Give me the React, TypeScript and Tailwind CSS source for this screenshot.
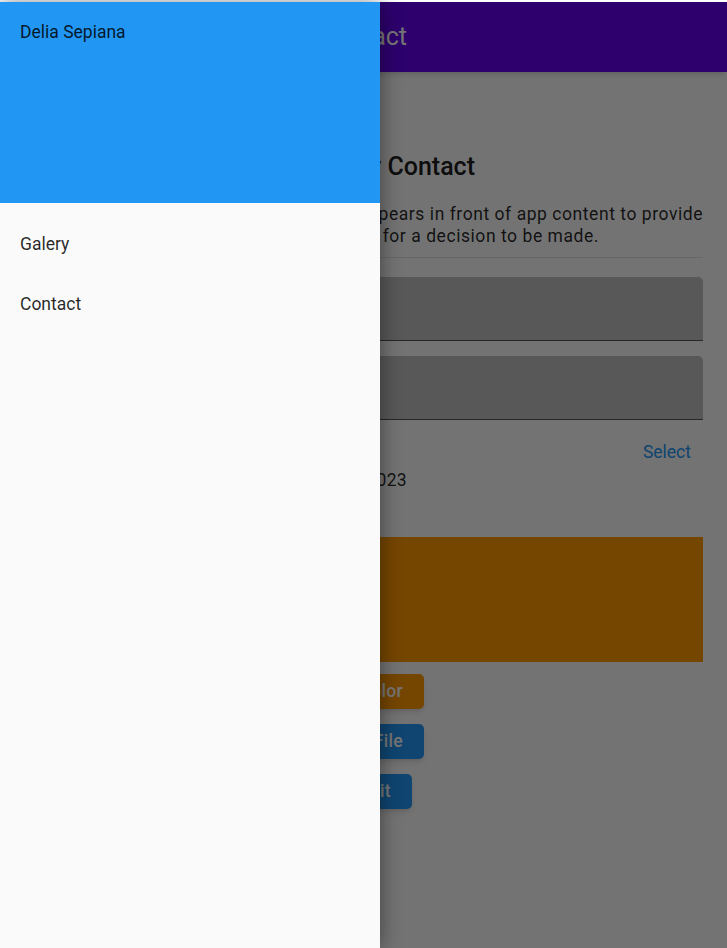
import React from "react";

export default function App() {
  return (
    <div className="w-[727px] h-[948px] overflow-hidden bg-white font-['Roboto',sans-serif] flex flex-col">
      <div className="h-[2px] bg-white shrink-0" />
      <div className="relative flex-1 bg-[#fafafa]">
        {/* Underlying page */}
        <div className="flex flex-col h-full">
          <div className="h-[70px] bg-[#6200ee] shadow-md flex items-center px-[20px] shrink-0">
            <div className="w-[30px] h-[30px] flex flex-col justify-center gap-[5px] px-[4px]">
              <div className="h-[3px] bg-white" />
              <div className="h-[3px] bg-white" />
              <div className="h-[3px] bg-white" />
            </div>
            <div className="ml-[40px] w-[317px] text-right text-[25px] leading-[30px] text-white whitespace-nowrap">
              Form Contact
            </div>
          </div>
          <div className="px-[24px] flex flex-col">
            <div className="mt-[80px] w-[451px] text-right text-[25px] leading-[30px] font-medium text-black/90 whitespace-nowrap">
              Dialog My Contact
            </div>
            <div className="mt-[21px] text-[17.5px] leading-[22px] tracking-[0.55px] text-black/85 flex flex-col">
              <div className="text-right whitespace-nowrap">
                A dialog is a type of modal window that appears in front of app content to provide
              </div>
              <div className="w-[575px] text-right whitespace-nowrap">
                critical information, or ask for a decision to be made.
              </div>
            </div>
            <div className="mt-[10px] h-[1px] bg-black/10" />
            <div className="mt-[19px] h-[64px] bg-[#c0c0c0] rounded-t-[5px] border-b-[1.5px] border-[#555555] flex items-center px-[15px] text-[17.5px] text-black/60">
              Name
            </div>
            <div className="mt-[15px] h-[64px] bg-[#c0c0c0] rounded-t-[5px] border-b-[1.5px] border-[#555555] flex items-center px-[15px] text-[17.5px] text-black/60">
              Phone
            </div>
            <div className="mt-[17px] h-[30px] flex items-center justify-between">
              <div className="text-[17.5px] text-black/85">Date</div>
              <div className="pr-[12px] text-[17.5px] text-[#2196f3]">Select</div>
            </div>
            <div className="mt-[2px] w-[383px] text-right text-[17.5px] leading-[22px] tracking-[0.3px] text-black/85 whitespace-nowrap">
              12/05/2023
            </div>
            <div className="mt-[46px] h-[125px] bg-[#ff9800]" />
            <div className="flex flex-col items-center ml-[-24px] mr-[-24px]">
              <div className="mt-[12px] w-[121px] h-[35px] rounded-[5px] bg-[#ff9800] shadow-md text-white text-[17.5px] font-medium tracking-[0.3px] flex items-center justify-end pr-[21px] whitespace-nowrap">
                Pick Color
              </div>
              <div className="mt-[15px] w-[121px] h-[35px] rounded-[5px] bg-[#2196f3] shadow-md text-white text-[17.5px] font-medium tracking-[0.3px] flex items-center justify-end pr-[21px] whitespace-nowrap">
                Pick File
              </div>
              <div className="mt-[15px] w-[97px] h-[35px] rounded-[5px] bg-[#2196f3] shadow-md text-white text-[17.5px] font-medium tracking-[0.3px] flex items-center justify-end pr-[21px] whitespace-nowrap">
                Submit
              </div>
            </div>
          </div>
        </div>

        {/* Scrim */}
        <div className="absolute inset-0 bg-black/[0.54]" />

        {/* Drawer */}
        <div className="absolute left-0 top-0 bottom-0 w-[380px] bg-[#fafafa] shadow-[0_0_20px_rgba(0,0,0,0.45)] flex flex-col">
          <div className="h-[201px] bg-[#2196f3] px-[20px] pt-[20px]">
            <div className="text-[17.5px] leading-[20px] text-black/85">Delia Sepiana</div>
          </div>
          <div className="pt-[11px] flex flex-col">
            <div className="h-[60px] px-[20px] flex items-center text-[17.5px] text-black/85">Galery</div>
            <div className="h-[60px] px-[20px] flex items-center text-[17.5px] text-black/85">Contact</div>
          </div>
        </div>
      </div>
    </div>
  );
}
